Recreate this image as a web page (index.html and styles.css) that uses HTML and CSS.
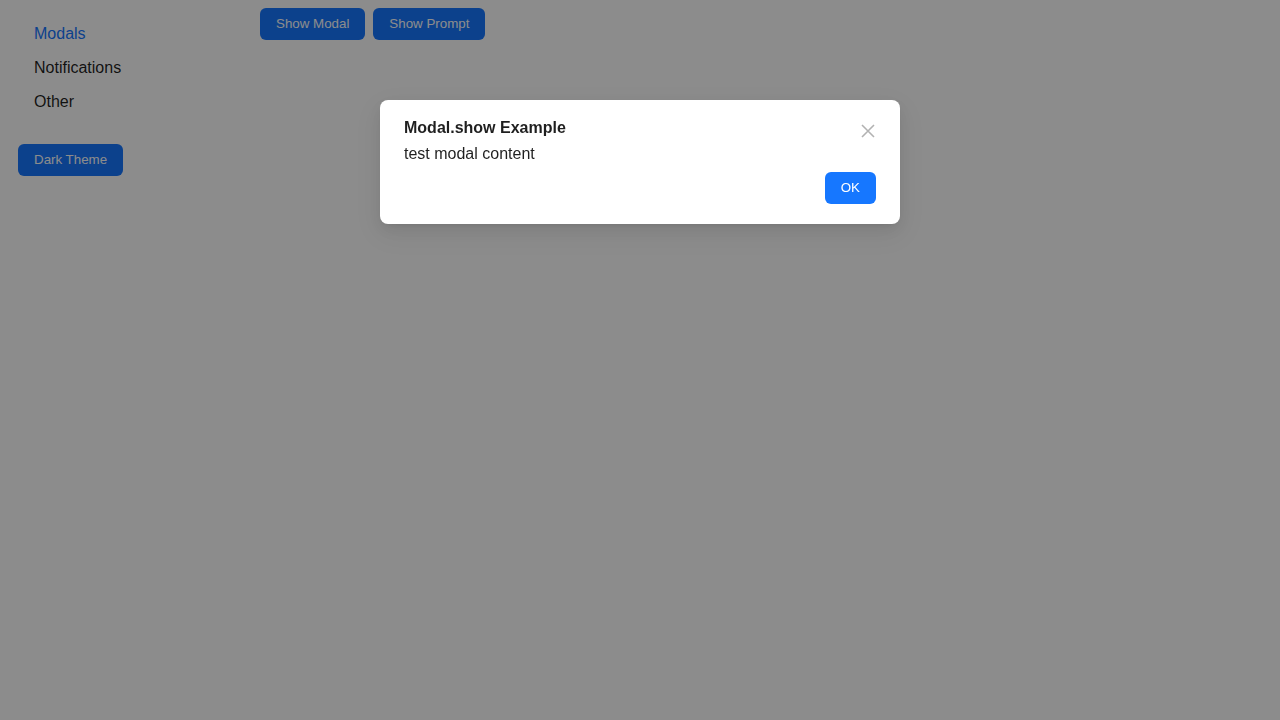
FILE: index.html
```html
<!DOCTYPE html>
<html>
<head>
<meta charset="utf-8">
<link rel="stylesheet" href="styles.css">
</head>
<body>
<div class="layout">
  <aside class="sidebar">
    <ul class="nav">
      <li class="nav-item active">Modals</li>
      <li class="nav-item">Notifications</li>
      <li class="nav-item">Other</li>
    </ul>
    <button class="btn theme-btn">Dark Theme</button>
  </aside>
  <main class="main">
    <div class="actions">
      <button class="btn">Show Modal</button>
      <button class="btn">Show Prompt</button>
    </div>
  </main>
</div>
<div class="overlay">
  <div class="modal">
    <button class="close" aria-label="Close">
      <svg width="14" height="14" viewBox="0 0 14 14"><path d="M1 1 L13 13 M13 1 L1 13" stroke="currentColor" stroke-width="1.6" fill="none"/></svg>
    </button>
    <div class="modal-title">Modal.show Example</div>
    <div class="modal-body">test modal content</div>
    <div class="modal-footer">
      <button class="btn ok">OK</button>
    </div>
  </div>
</div>
</body>
</html>
```
FILE: styles.css
```css
html, body {
  margin: 0;
  padding: 0;
  height: 100%;
  background: #ffffff;
  font-family: "Liberation Sans", Arial, sans-serif;
  color: rgba(0, 0, 0, 0.88);
}
.layout {
  display: flex;
  min-height: 100vh;
}
.sidebar {
  width: 260px;
  flex: none;
  padding-top: 17px;
  box-sizing: border-box;
}
.nav {
  list-style: none;
  margin: 0;
  padding: 0 0 0 34px;
}
.nav-item {
  font-size: 16px;
  line-height: 34px;
  height: 34px;
}
.nav-item.active {
  color: #1677ff;
}
.btn {
  font-family: "Liberation Sans", Arial, sans-serif;
  font-size: 13.333px;
  height: 32px;
  padding: 0 16px 1px;
  border: none;
  border-radius: 6px;
  background: #1677ff;
  color: #ffffff;
  cursor: pointer;
}
.theme-btn {
  margin: 25px 0 0 18px;
}
.main {
  flex: 1;
  padding-top: 8px;
}
.actions {
  display: flex;
  gap: 8px;
}
.overlay {
  position: fixed;
  inset: 0;
  background: rgba(0, 0, 0, 0.45);
  display: flex;
  justify-content: center;
  align-items: flex-start;
  padding-top: 100px;
  box-sizing: border-box;
}
.modal {
  position: relative;
  width: 520px;
  box-sizing: border-box;
  background: #ffffff;
  border-radius: 8px;
  padding: 17px 24px 20px;
  box-shadow: 0 6px 16px 0 rgba(0, 0, 0, 0.08), 0 3px 6px -4px rgba(0, 0, 0, 0.12), 0 9px 28px 8px rgba(0, 0, 0, 0.05);
}
.modal-title {
  font-size: 16px;
  font-weight: bold;
  line-height: 22px;
  color: rgba(0, 0, 0, 0.88);
}
.modal-body {
  font-size: 16px;
  line-height: 22px;
  margin-top: 4px;
  color: rgba(0, 0, 0, 0.88);
}
.modal-footer {
  display: flex;
  justify-content: flex-end;
  margin-top: 7px;
}
.close {
  position: absolute;
  top: 21px;
  right: 22px;
  width: 20px;
  height: 20px;
  padding: 0;
  border: none;
  background: transparent;
  color: rgba(0, 0, 0, 0.3);
  display: flex;
  align-items: center;
  justify-content: center;
  cursor: pointer;
}
```
